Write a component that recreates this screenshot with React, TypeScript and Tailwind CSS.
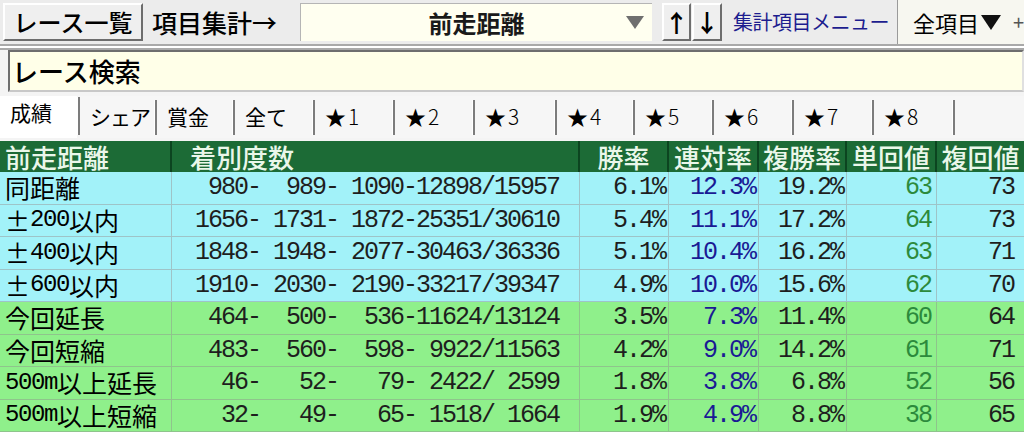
import React from "react";

type Row = {
  label: string;
  counts: [number, number, number, number, number];
  win: number;
  quinella: number;
  show: number;
  winRet: number;
  showRet: number;
  tone: "cyan" | "green";
};

const ROWS: Row[] = [
  { label: "同距離", counts: [980, 989, 1090, 12898, 15957], win: 6.1, quinella: 12.3, show: 19.2, winRet: 63, showRet: 73, tone: "cyan" },
  { label: "±200以内", counts: [1656, 1731, 1872, 25351, 30610], win: 5.4, quinella: 11.1, show: 17.2, winRet: 64, showRet: 73, tone: "cyan" },
  { label: "±400以内", counts: [1848, 1948, 2077, 30463, 36336], win: 5.1, quinella: 10.4, show: 16.2, winRet: 63, showRet: 71, tone: "cyan" },
  { label: "±600以内", counts: [1910, 2030, 2190, 33217, 39347], win: 4.9, quinella: 10.0, show: 15.6, winRet: 62, showRet: 70, tone: "cyan" },
  { label: "今回延長", counts: [464, 500, 536, 11624, 13124], win: 3.5, quinella: 7.3, show: 11.4, winRet: 60, showRet: 64, tone: "green" },
  { label: "今回短縮", counts: [483, 560, 598, 9922, 11563], win: 4.2, quinella: 9.0, show: 14.2, winRet: 61, showRet: 71, tone: "green" },
  { label: "500m以上延長", counts: [46, 52, 79, 2422, 2599], win: 1.8, quinella: 3.8, show: 6.8, winRet: 52, showRet: 56, tone: "green" },
  { label: "500m以上短縮", counts: [32, 49, 65, 1518, 1664], win: 1.9, quinella: 4.9, show: 8.8, winRet: 38, showRet: 65, tone: "green" },
];

const TABS = [
  { label: "成績", w: 80 },
  { label: "シェア", w: 77 },
  { label: "賞金", w: 78 },
  { label: "全て", w: 80 },
  { label: "★1", w: 80 },
  { label: "★2", w: 80 },
  { label: "★3", w: 82 },
  { label: "★4", w: 78 },
  { label: "★5", w: 79 },
  { label: "★6", w: 80 },
  { label: "★7", w: 80 },
  { label: "★8", w: 81 },
];

const pad = (n: number) => String(n).padStart(5, " ");
const pct = (n: number) => `${n.toFixed(1)}%`;
const countText = (c: Row["counts"]) =>
  `${pad(c[0])}-${pad(c[1])}-${pad(c[2])}-${pad(c[3])}/${pad(c[4])}`;

const COLS = "grid grid-cols-[172px_408px_89px_90px_88px_90px_1fr]";
const MONO = "font-['Liberation_Mono',monospace] text-[25px] tracking-[-2px] whitespace-pre";

// half-width runs (digits, m, ±) are set in the mono face, the rest in the CJK face
function Label({ text }: { text: string }) {
  const parts = text.match(/[0-9a-z]+|[^0-9a-z]+/g) ?? [];
  return (
    <>
      {parts.map((p, i) =>
        /^[0-9a-z]+$/.test(p) ? (
          <span key={i} className="font-['Liberation_Mono',monospace] text-[24px] tracking-[-1.4px]">
            {p}
          </span>
        ) : (
          <span key={i}>{p}</span>
        )
      )}
    </>
  );
}

function RaisedButton({ children, className }: { children: React.ReactNode; className: string }) {
  return (
    <div
      className={`flex h-[38px] shrink-0 items-center justify-center border-2 border-t-white border-l-white border-r-[#6d6d6d] border-b-[#6d6d6d] bg-[#efefef] text-black ${className}`}
    >
      {children}
    </div>
  );
}

function Toolbar() {
  return (
    <div className="flex h-[44px] items-center bg-[#ececec]">
      <RaisedButton className="ml-[3px] w-[140px] text-[24px] font-medium">レース一覧</RaisedButton>
      <div className="ml-[9px] w-[140px] shrink-0 text-[25px] font-medium text-black">項目集計→</div>
      <div className="ml-[8px] grid h-[38px] w-[352px] shrink-0 grid-cols-[1fr_auto_1fr] items-center border-t border-l border-[#b5b5b5] bg-[#fffff0]">
        <span />
        <span className="text-[24px] font-bold text-[#1a1a1a]">前走距離</span>
        <span className="flex justify-end pr-[8px]">
          <svg width="18" height="13" viewBox="0 0 18 13">
            <polygon points="0,0 18,0 9,13" fill="#6f6f6f" />
          </svg>
        </span>
      </div>
      <RaisedButton className="ml-[10px] w-[29px] text-[24px] font-bold">↑</RaisedButton>
      <RaisedButton className="ml-[1px] w-[30px] text-[24px] font-bold">↓</RaisedButton>
      <div className="ml-[11px] w-[160px] shrink-0 text-[20px] tracking-[-0.5px] text-[#1d1d8f]">集計項目メニュー</div>
      <div className="ml-[4px] flex h-full flex-1 items-center border-l border-[#9a9a9a] bg-[#f7f7f0] pl-[15px]">
        <span className="text-[22px] text-black">全項目</span>
        <svg className="ml-[2px] shrink-0" width="20" height="15" viewBox="0 0 20 15">
          <polygon points="0,0 20,0 10,15" fill="#111" />
        </svg>
        <span className="ml-[12px] text-[20px] text-[#555]">+</span>
      </div>
    </div>
  );
}

function SearchBox() {
  return (
    <div className="pl-[8px]">
      <div className="flex h-[42px] items-center border-2 border-t-[#6e6e6e] border-l-[#6e6e6e] border-r-[#e0e0e0] border-b-[#c8c8c8] bg-[#ffffe8] pl-[2px] text-[26px] font-medium text-black">
        レース検索
      </div>
    </div>
  );
}

function Tabs() {
  return (
    <div className="mt-[4px] flex h-[42px] bg-[#f6f6f6]">
      {TABS.map((t, i) => (
        <div key={t.label} className="flex h-full shrink-0" style={{ width: t.w }}>
          <div
            className={`flex-1 pl-[10px] text-[21px] text-black ${
              i === 0 ? "bg-white pt-[6px]" : "pt-[10px]"
            }`}
          >
            {t.label.startsWith("★") ? (
              <>
                <span className="text-[21px]">★</span>
                <span className="ml-[2px] font-light">{t.label.slice(1)}</span>
              </>
            ) : (
              <span className={i === 1 ? "tracking-[-1px]" : ""}>{t.label}</span>
            )}
          </div>
          <div
            className={`flex ${i === 0 ? "mt-[1px] h-[38px]" : "mt-[4px] h-[35px]"}`}
          >
            <div className="w-px bg-white" />
            <div className="w-[2px] bg-[#7c7c7c]" />
          </div>
        </div>
      ))}
    </div>
  );
}

function HeaderRow() {
  const cell = "flex items-center border-r-2 border-[#0c4420] text-[26px] font-medium text-[#eaf7ea]";
  return (
    <div className={`${COLS} mt-[3px] h-[31px] bg-[#1c6b36]`}>
      <div className={`${cell} pl-[5px]`}>前走距離</div>
      <div className={`${cell} pl-[18px]`}>着別度数</div>
      <div className={`${cell} justify-center`}>勝率</div>
      <div className={`${cell} justify-center`}>連対率</div>
      <div className={`${cell} justify-center`}>複勝率</div>
      <div className={`${cell} justify-center`}>単回値</div>
      <div className="flex items-center justify-center text-[26px] font-medium text-[#eaf7ea]">複回値</div>
    </div>
  );
}

function DataRow({ row }: { row: Row }) {
  const bg = row.tone === "cyan" ? "bg-[#a2f2f9]" : "bg-[#8ff08b]";
  const line = row.tone === "cyan" ? "border-[#9ec4c8]" : "border-[#8fc48c]";
  const cell = `flex items-center border-r border-b ${line}`;
  return (
    <div className={`${COLS} h-[32.5px] ${bg}`}>
      <div className={`${cell} pl-[5px] text-[25px] text-black`}>
        <Label text={row.label} />
      </div>
      <div className={`${cell} justify-end pr-[20px] text-[#1e1e1e] ${MONO}`}>{countText(row.counts)}</div>
      <div className={`${cell} justify-end pr-[3px] text-[#1e1e1e] ${MONO}`}>{pct(row.win)}</div>
      <div className={`${cell} justify-end pr-[3px] text-[#1a1a94] ${MONO}`}>{pct(row.quinella)}</div>
      <div className={`${cell} justify-end pr-[3px] text-[#1e1e1e] ${MONO}`}>{pct(row.show)}</div>
      <div className={`${cell} justify-end pr-[5px] text-[#2c8a3c] ${MONO}`}>{row.winRet}</div>
      <div className={`flex items-center justify-end border-b ${line} pr-[10px] text-[#1e1e1e] ${MONO}`}>{row.showRet}</div>
    </div>
  );
}

export default function App() {
  return (
    <div className="h-[432px] w-[1024px] overflow-hidden whitespace-nowrap bg-[#f4f4f4] font-['Noto_Sans_CJK_JP',sans-serif] leading-none">
      <Toolbar />
      <div className="h-[6px] border-y-2 border-[#a9a9a9] bg-white" />
      <SearchBox />
      <Tabs />
      <HeaderRow />
      {ROWS.map((r) => (
        <DataRow key={r.label} row={r} />
      ))}
    </div>
  );
}
